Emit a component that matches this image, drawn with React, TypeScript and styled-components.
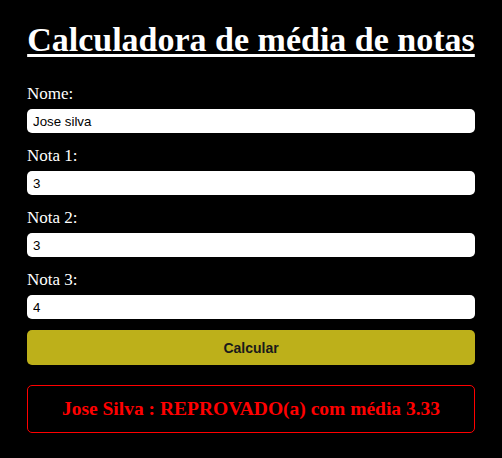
import React from "react";
import styled, { createGlobalStyle } from "styled-components";

const Global = createGlobalStyle`
  html, body { margin: 0; padding: 0; background: #000; }
  body { font-family: "Liberation Serif", serif; color: #fff; }
`;

const Page = styled.div`
  width: 448px;
  margin: 0 auto;
  padding-top: 20px;
`;

const Title = styled.h1`
  margin: 0 0 25px;
  font-family: "Liberation Serif", serif;
  font-size: 34px;
  line-height: 40px;
  font-weight: bold;
  text-decoration: underline;
  text-decoration-thickness: 3px;
  text-underline-offset: 3px;
  text-align: center;
  color: #fff;
`;

const Form = styled.div`
  display: flex;
  flex-direction: column;
`;

const Label = styled.label`
  display: block;
  font-size: 17px;
  line-height: 18px;
  margin-bottom: 6px;
`;

const Input = styled.input`
  box-sizing: border-box;
  width: 100%;
  height: 24px;
  border: none;
  border-radius: 5px;
  padding: 0 6px;
  margin-bottom: 14px;
  font-family: "Liberation Sans", Arial, sans-serif;
  font-size: 13.3px;
  color: #000;
  background: #fff;
  outline: none;
`;

const Button = styled.button`
  height: 35px;
  margin-top: -3px;
  border: none;
  border-radius: 5px;
  background: #bdb01a;
  color: #1a1a1a;
  font-family: "Liberation Sans", Arial, sans-serif;
  font-weight: bold;
  font-size: 14px;
`;

const Result = styled.div`
  margin-top: 20px;
  height: 48px;
  box-sizing: border-box;
  border: 1px solid #ff0000;
  border-radius: 5px;
  display: flex;
  align-items: center;
  justify-content: center;
  color: #ff0000;
  font-weight: bold;
  font-size: 19.5px;
`;

const fields = [
  { label: "Nome:", value: "Jose silva" },
  { label: "Nota 1:", value: "3" },
  { label: "Nota 2:", value: "3" },
  { label: "Nota 3:", value: "4" },
];

export default function App() {
  return (
    <>
      <Global />
      <Page>
        <Title>Calculadora de média de notas</Title>
        <Form>
          {fields.map((f) => (
            <React.Fragment key={f.label}>
              <Label>{f.label}</Label>
              <Input defaultValue={f.value} />
            </React.Fragment>
          ))}
          <Button>Calcular</Button>
          <Result>Jose Silva : REPROVADO(a) com média 3.33</Result>
        </Form>
      </Page>
    </>
  );
}
